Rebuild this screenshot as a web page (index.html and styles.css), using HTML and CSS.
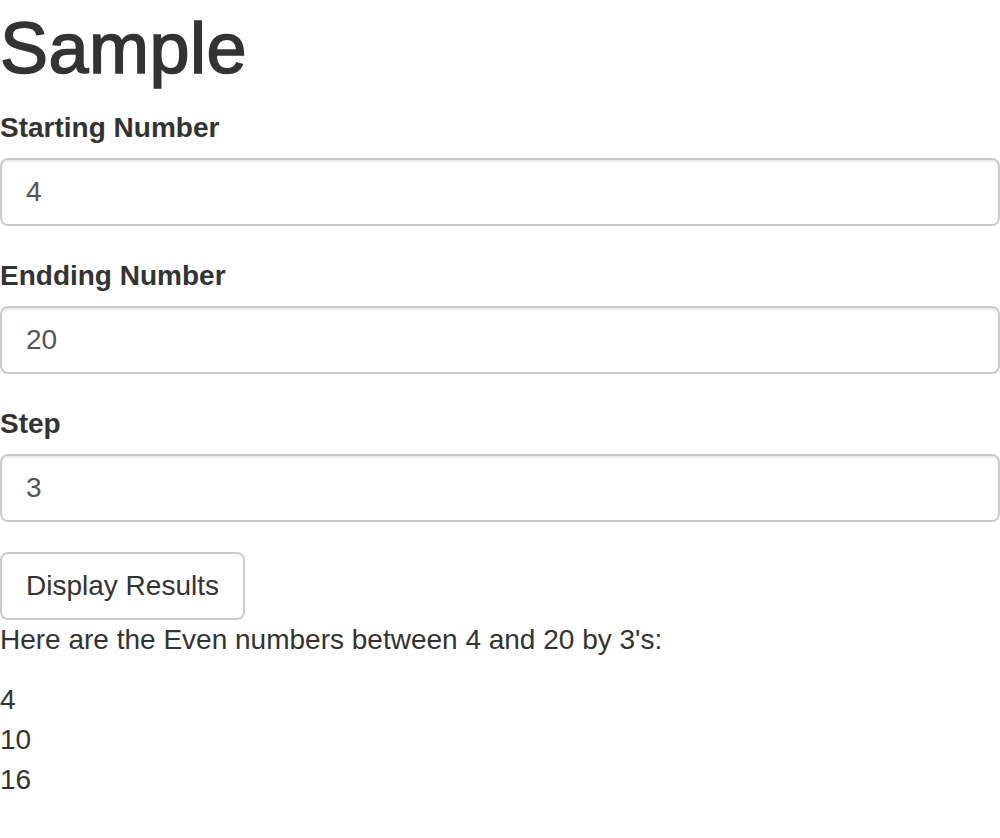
FILE: index.html
```html
<!DOCTYPE html>
<html>
<head>
<meta charset="utf-8">
<title>Sample</title>
<link rel="stylesheet" href="styles.css">
</head>
<body>
<div class="container">
  <h1 class="title">Sample</h1>
  <form class="form">
    <div class="form-group">
      <label class="label" for="start">Starting Number</label>
      <input class="form-control" id="start" type="text" value="4">
    </div>
    <div class="form-group">
      <label class="label" for="end">Endding Number</label>
      <input class="form-control" id="end" type="text" value="20">
    </div>
    <div class="form-group">
      <label class="label" for="step">Step</label>
      <input class="form-control" id="step" type="text" value="3">
    </div>
    <button class="btn" type="button">Display Results</button>
  </form>
  <p class="summary">Here are the Even numbers between 4 and 20 by 3's:</p>
  <div class="results">
    <div class="result">4</div>
    <div class="result">10</div>
    <div class="result">16</div>
  </div>
</div>
</body>
</html>
```

FILE: styles.css
```css
* {
  box-sizing: border-box;
}

html, body {
  margin: 0;
  padding: 0;
  background: #fff;
}

body {
  font-family: "Liberation Sans", Arial, Helvetica, sans-serif;
  font-size: 28px;
  line-height: 40px;
  color: #333;
}

.container {
  width: 1000px;
}

.title {
  font-size: 72px;
  font-weight: 500;
  line-height: 1.1;
  margin: 9px 0 20px;
  color: #333;
  letter-spacing: 0.5px;
  -webkit-text-stroke: 1.6px #333;
}

.form {
  margin: 0;
}

.form-group {
  margin-bottom: 30px;
}

.label {
  display: inline-block;
  font-weight: bold;
  margin-bottom: 10px;
}

.form-control {
  display: block;
  width: 100%;
  height: 68px;
  padding: 12px 24px;
  font-family: inherit;
  font-size: 28px;
  line-height: 40px;
  color: #555;
  background: #fff;
  border: 2px solid #ccc;
  border-radius: 8px;
  box-shadow: inset 0 2px 2px rgba(0, 0, 0, 0.075);
  margin: 0;
  outline: none;
}

.btn {
  display: block;
  padding: 12px 24px;
  font-family: inherit;
  font-size: 28px;
  line-height: 40px;
  color: #333;
  background: #fff;
  border: 2px solid #ccc;
  border-radius: 8px;
  margin: 0;
  cursor: pointer;
}

.summary {
  margin: 0 0 20px;
}

.results {
  margin: 0;
}
```
